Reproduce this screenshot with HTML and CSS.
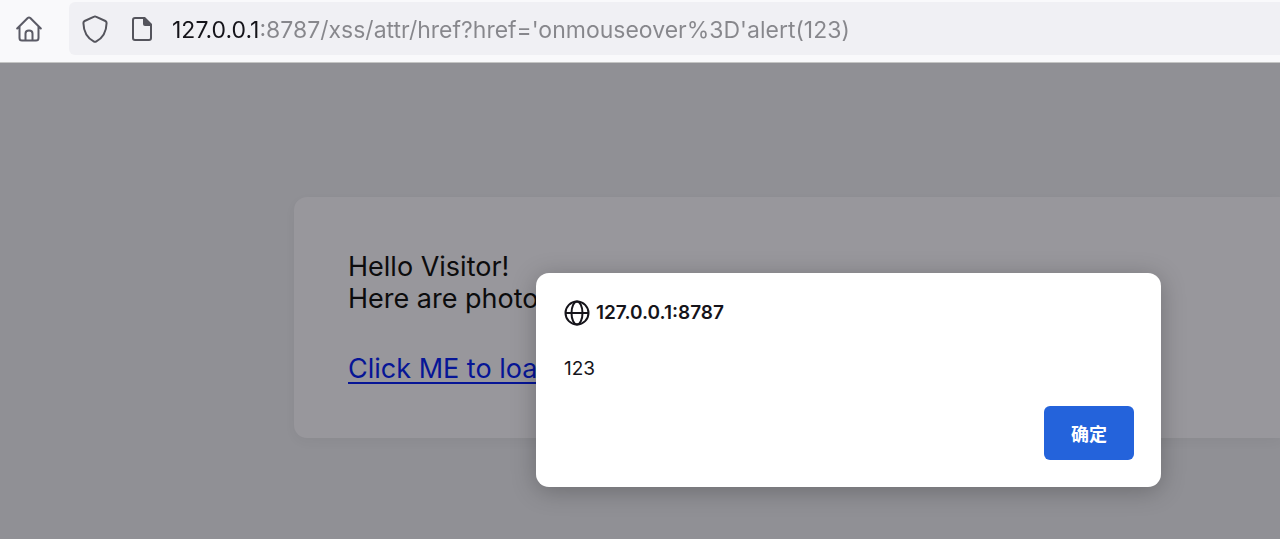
FILE: index.html
```html
<!DOCTYPE html>
<html lang="zh-CN">
<head>
<meta charset="utf-8">
<title>127.0.0.1:8787</title>
<link rel="stylesheet" href="styles.css">
</head>
<body>
<header class="toolbar">
  <button class="home" type="button" aria-label="Home">
    <svg width="26" height="26" viewBox="0 0 26 26" fill="none" stroke="#5b5b66" stroke-width="2" stroke-linecap="round" stroke-linejoin="round"><path d="M1.200 12.500 11.700 2Q13 .9 14.300 2L24.800 12.500M3.500 10.500V22Q3.500 24.500 6 24.500H20Q22.500 24.500 22.500 22V10.500M9.500 24.200V17.500Q9.500 14.500 13 14.500Q16.500 14.500 16.500 17.500V24.200"/></svg>
  </button>
  <div class="urlbar">
    <svg width="26" height="28" viewBox="0 0 26 28" fill="none" stroke="#54545c" stroke-width="2" stroke-linejoin="round"><path d="M12.200 1.700Q13 1.300 13.800 1.700L23.400 6Q24.600 6.600 24.600 8C24.400 16.500 20.400 23.300 14 26.600Q13 27.100 12 26.600C5.600 23.300 1.600 16.500 1.400 8Q1.400 6.600 2.600 6Z"/></svg>
    <svg width="22" height="26" viewBox="0 0 22 26"><path d="M13 2H4Q2 2 2 4V22Q2 24 4 24H18Q20 24 20 22V9" fill="none" stroke="#54545c" stroke-width="2"/><path d="M12 1H14L21 8V10H14Q12 10 12 8Z" fill="#54545c"/></svg>
    <input class="url" type="text" aria-label="Address" spellcheck="false" value="127.0.0.1:8787/xss/attr/href?href='onmouseover%3D'alert(123)">
  </div>
</header>
<main class="page">
  <section class="card">
    <p class="greeting">Hello Visitor!<br>Here are photos</p>
    <a class="link" href="#">Click ME to load</a>
  </section>
</main>
<dialog class="alert" open aria-labelledby="origin">
  <h1 class="origin" id="origin">
    <svg width="26" height="26" viewBox="0 0 26 26" fill="none" stroke="#15141a" stroke-width="2"><circle cx="13" cy="13" r="11.500"/><ellipse cx="13" cy="13" rx="5.500" ry="11.500"/><path d="M1.500 13H24.500"/></svg>
    127.0.0.1:8787
  </h1>
  <p class="message">123</p>
  <div class="actions"><button class="confirm" type="button">确定</button></div>
</dialog>
</body>
</html>
```
FILE: styles.css
```css
* {
  box-sizing: border-box;
}

body {
  margin: 0;
  min-height: 100vh;
  display: flex;
  flex-direction: column;
  overflow: hidden;
  font-family: Inter, "Noto Sans CJK SC", sans-serif;
  color: #0c0c0d;
  background: #909095;
}

svg {
  display: block;
  flex: none;
}

.toolbar {
  display: flex;
  gap: 27px;
  padding: 2px 0 7px 16px;
  background: #f9f9fb;
  border-bottom: 1px solid #c4c5c4;
}

.home {
  padding: 0;
  border: 0;
  background: none;
}

.urlbar {
  flex: 1;
  display: flex;
  align-items: center;
  height: 53px;
  padding-left: 13px;
  gap: 23px;
  background: #f0f0f4;
  border-radius: 6px 0 0 6px;
}

.url {
  flex: 1;
  min-width: 0;
  height: 36px;
  margin-left: -4px;
  padding: 2px 0 0;
  border: 0;
  outline: 0;
  font: 23px Inter, sans-serif;
  background: linear-gradient(to right, #15141a 88px, #87878c 88px);
  background-clip: text;
  -webkit-background-clip: text;
  -webkit-text-fill-color: transparent;
}

.page {
  flex: 1;
  padding: 134px 0 101px 294px;
}

.card {
  padding: 54px 54px 53px;
  border-radius: 13px 0 0 13px;
  background: #98979c;
  box-shadow: 0 4px 12px rgba(0, 0, 0, 0.04);
  font-size: 27px;
  line-height: 32px;
}

.greeting {
  margin: 0 0 38px;
}

.link {
  display: block;
  color: #061596;
  text-decoration-thickness: 2px;
  text-underline-offset: 4px;
}

.alert {
  position: absolute;
  top: 273px;
  left: 536px;
  width: 625px;
  margin: 0;
  padding: 27px 27px 27px 28px;
  border: 0;
  border-radius: 13px;
  color: #15141a;
  background: #fff;
  box-shadow: 0 4px 24px rgba(0, 0, 0, 0.25);
  font-size: 19px;
}

.origin {
  display: flex;
  align-items: center;
  gap: 6px;
  margin: 0 0 30px;
  font-size: 19px;
  font-weight: 600;
  line-height: 26px;
}

.message {
  margin: 0 0 24px;
  line-height: 26px;
}

.actions {
  display: flex;
  justify-content: flex-end;
}

.confirm {
  width: 90px;
  height: 54px;
  padding: 0;
  border: 0;
  border-radius: 6px;
  color: #fff;
  background: #2463db;
  font: 700 18px "Noto Sans CJK SC", sans-serif;
}
```
